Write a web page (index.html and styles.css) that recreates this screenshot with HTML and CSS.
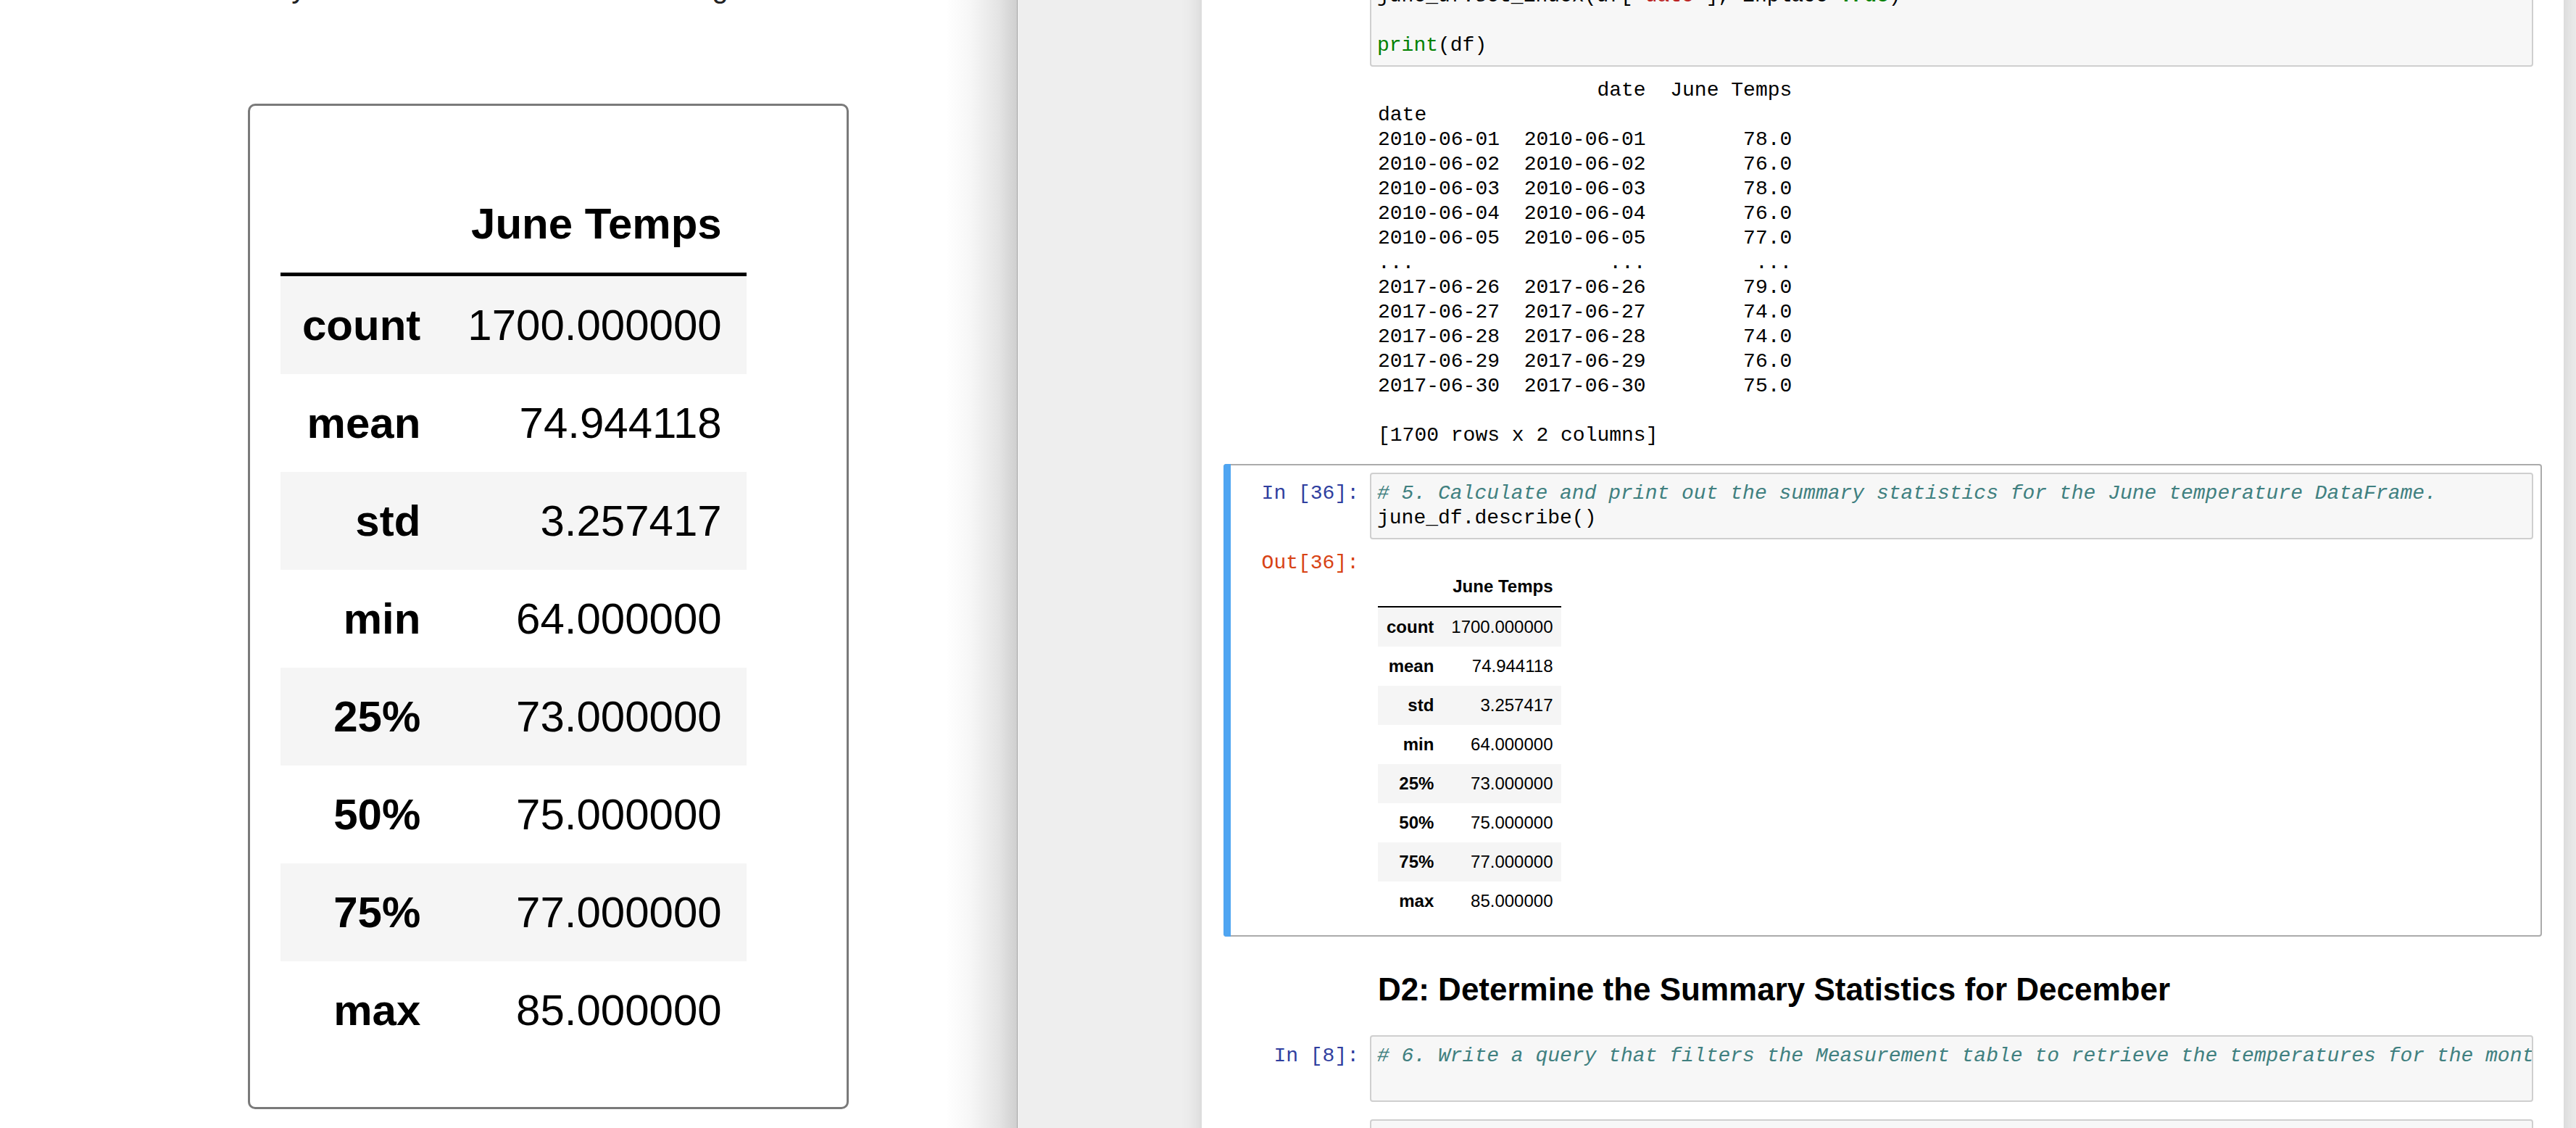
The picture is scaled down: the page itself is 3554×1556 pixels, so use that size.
FILE: index.html
```html
<!DOCTYPE html>
<html lang="en">
<head>
<meta charset="utf-8">
<title>June Temps summary</title>
<link rel="stylesheet" href="styles.css">
</head>
<body>
<div class="left-panel">
  <p class="doc-text">Summary statistics for the June data using</p>
  <div class="figure-card">
    <table class="dataframe df-big">
      <thead><tr><th></th><th>June Temps</th></tr></thead>
      <tbody>
        <tr><th>count</th><td>1700.000000</td></tr>
        <tr><th>mean</th><td>74.944118</td></tr>
        <tr><th>std</th><td>3.257417</td></tr>
        <tr><th>min</th><td>64.000000</td></tr>
        <tr><th>25%</th><td>73.000000</td></tr>
        <tr><th>50%</th><td>75.000000</td></tr>
        <tr><th>75%</th><td>77.000000</td></tr>
        <tr><th>max</th><td>85.000000</td></tr>
      </tbody>
    </table>
  </div>
</div>

<div class="notebook-area">
  <div class="container">

    <div class="cell code first">
      <div class="input">
        <div class="prompt in"></div>
        <div class="input_area"><pre>june_df.set_index(df[<span class="s">'date'</span>], inplace<span class="o">=</span><span class="k">True</span>)
<span class="blank"> </span>
<span class="b">print</span>(df)</pre></div>
      </div>
      <div class="output">
        <div class="prompt"></div>
        <div class="output_subarea"><pre>                  date  June Temps
date                              
2010-06-01  2010-06-01        78.0
2010-06-02  2010-06-02        76.0
2010-06-03  2010-06-03        78.0
2010-06-04  2010-06-04        76.0
2010-06-05  2010-06-05        77.0
...                ...         ...
2017-06-26  2017-06-26        79.0
2017-06-27  2017-06-27        74.0
2017-06-28  2017-06-28        74.0
2017-06-29  2017-06-29        76.0
2017-06-30  2017-06-30        75.0
<span class="blank"> </span>
[1700 rows x 2 columns]</pre></div>
      </div>
    </div>

    <div class="cell code selected">
      <div class="input">
        <div class="prompt in">In [36]:</div>
        <div class="input_area"><pre><span class="c"># 5. Calculate and print out the summary statistics for the June temperature DataFrame.</span>
june_df.describe()</pre></div>
      </div>
      <div class="output">
        <div class="prompt out">Out[36]:</div>
        <div class="output_subarea">
          <table class="dataframe df-small">
            <thead><tr><th></th><th>June Temps</th></tr></thead>
            <tbody>
              <tr><th>count</th><td>1700.000000</td></tr>
              <tr><th>mean</th><td>74.944118</td></tr>
              <tr><th>std</th><td>3.257417</td></tr>
              <tr><th>min</th><td>64.000000</td></tr>
              <tr><th>25%</th><td>73.000000</td></tr>
              <tr><th>50%</th><td>75.000000</td></tr>
              <tr><th>75%</th><td>77.000000</td></tr>
              <tr><th>max</th><td>85.000000</td></tr>
            </tbody>
          </table>
        </div>
      </div>
    </div>

    <div class="cell text">
      <div class="prompt"></div>
      <div class="text_cell_render">
        <h2>D2: Determine the Summary Statistics for December</h2>
      </div>
    </div>

    <div class="cell code">
      <div class="input">
        <div class="prompt in">In [8]:</div>
        <div class="input_area"><pre><span class="c"># 6. Write a query that filters the Measurement table to retrieve the temperatures for the month of December.</span>
<span class="blank"> </span></pre></div>
      </div>
    </div>

    <div class="cell code">
      <div class="input">
        <div class="prompt in"></div>
        <div class="input_area"><pre><span class="blank"> </span></pre></div>
      </div>
    </div>

  </div>
</div>
</body>
</html>
```

FILE: styles.css
```css
html, body {
  margin: 0;
  padding: 0;
}

body {
  width: 3554px;
  height: 1556px;
  overflow: hidden;
  display: flex;
  background: #eeeeee;
  font-family: "Liberation Sans", Arial, sans-serif;
  color: #000;
}

/* ---------- left document panel ---------- */
.left-panel {
  width: 1404px;
  flex: none;
  box-sizing: border-box;
  border-right: 1px solid #a6a6a6;
  background: linear-gradient(to right, #ffffff 0, #ffffff 1305px, #f6f6f6 1340px, #e4e4e4 1378px, #cfcfcf 1403px);
  overflow: hidden;
}

.doc-text {
  margin: -40px 0 0 0;
  padding-left: 251px;
  font-size: 40px;
  line-height: 46px;
  color: #222;
  white-space: nowrap;
}

.figure-card {
  margin: 137px 0 0 342px;
  width: 829px;
  box-sizing: border-box;
  border: 3px solid #7a7a7a;
  border-radius: 10px;
  background: #fff;
  padding: 95px 0 66px 42px;
}

/* ---------- dataframe tables ---------- */
.dataframe {
  border-collapse: collapse;
  border-spacing: 0;
  color: #000;
  font-family: "Liberation Sans", Arial, sans-serif;
}

.dataframe th,
.dataframe td {
  text-align: right;
  vertical-align: middle;
  white-space: nowrap;
}

.dataframe th { font-weight: bold; }
.dataframe td { font-weight: normal; }

.dataframe thead th { vertical-align: bottom; }

.dataframe tbody tr:nth-child(odd) { background: #f5f5f5; }

.df-big { font-size: 60px; }
.df-big th,
.df-big td {
  padding: 30px;
  line-height: 75px;
}
.df-big td,
.df-big thead th:last-child {
  padding-left: 35px;
  padding-right: 34px;
}
.df-big thead th { border-bottom: 5px solid #000; }

.df-small {
  font-size: 24px;
  margin-top: 22px;
}
.df-small th,
.df-small td {
  padding: 12px;
  line-height: 30px;
}
.df-small thead th { border-bottom: 2px solid #000; }

/* ---------- notebook ---------- */
.notebook-area {
  flex: 1;
  min-width: 0;
  background: #eeeeee;
  padding-left: 254px;
  overflow: hidden;
}

.container {
  width: 1879px;
  min-height: 1800px;
  box-sizing: border-box;
  padding: 0 30px;
  background: #fff;
  box-shadow: 0 0 24px 2px rgba(87, 87, 87, 0.2);
}

.cell {
  border: 2px solid transparent;
  border-radius: 4px;
  padding: 10px;
  position: relative;
}

.cell.first { margin-top: -46px; }

.cell.selected { border-color: #ababab; }
.cell.selected::before {
  content: "";
  position: absolute;
  left: -2px;
  top: -2px;
  bottom: -2px;
  width: 10px;
  background: #4fa5f2;
  border-radius: 4px 0 0 4px;
}

.cell.text { display: flex; }

.input,
.output { display: flex; }

.output { padding: 16px 0 10px 0; }

.prompt {
  width: 190px;
  flex: none;
  box-sizing: border-box;
  padding-right: 15px;
  text-align: right;
  font-family: "Liberation Mono", "Courier New", monospace;
  font-size: 28px;
  line-height: 34px;
}

.prompt.in {
  padding-top: 12px;
  color: #303f9f;
}

.prompt.out { color: #d84315; }

.input_area {
  flex: 1;
  min-width: 0;
  background: #f7f7f7;
  border: 2px solid #cfcfcf;
  border-radius: 4px;
  padding: 10px 8px;
  overflow: hidden;
}

pre {
  margin: 0;
  font-family: "Liberation Mono", "Courier New", monospace;
  font-size: 28px;
  line-height: 34px;
  white-space: pre;
  color: #000;
}

.output_subarea {
  flex: 1;
  min-width: 0;
  padding-left: 11px;
}

.c { color: #408080; font-style: italic; }
.s { color: #ba2121; }
.k { color: #008000; font-weight: bold; }
.b { color: #008000; }
.o { color: #aa22ff; }

.text_cell_render {
  flex: 1;
  padding: 0 11px;
}

.text_cell_render h2 {
  margin: 36px 0 14px 0;
  font-family: "Liberation Sans", Arial, sans-serif;
  font-weight: bold;
  font-size: 44px;
  line-height: 50px;
  color: #000;
}
```
